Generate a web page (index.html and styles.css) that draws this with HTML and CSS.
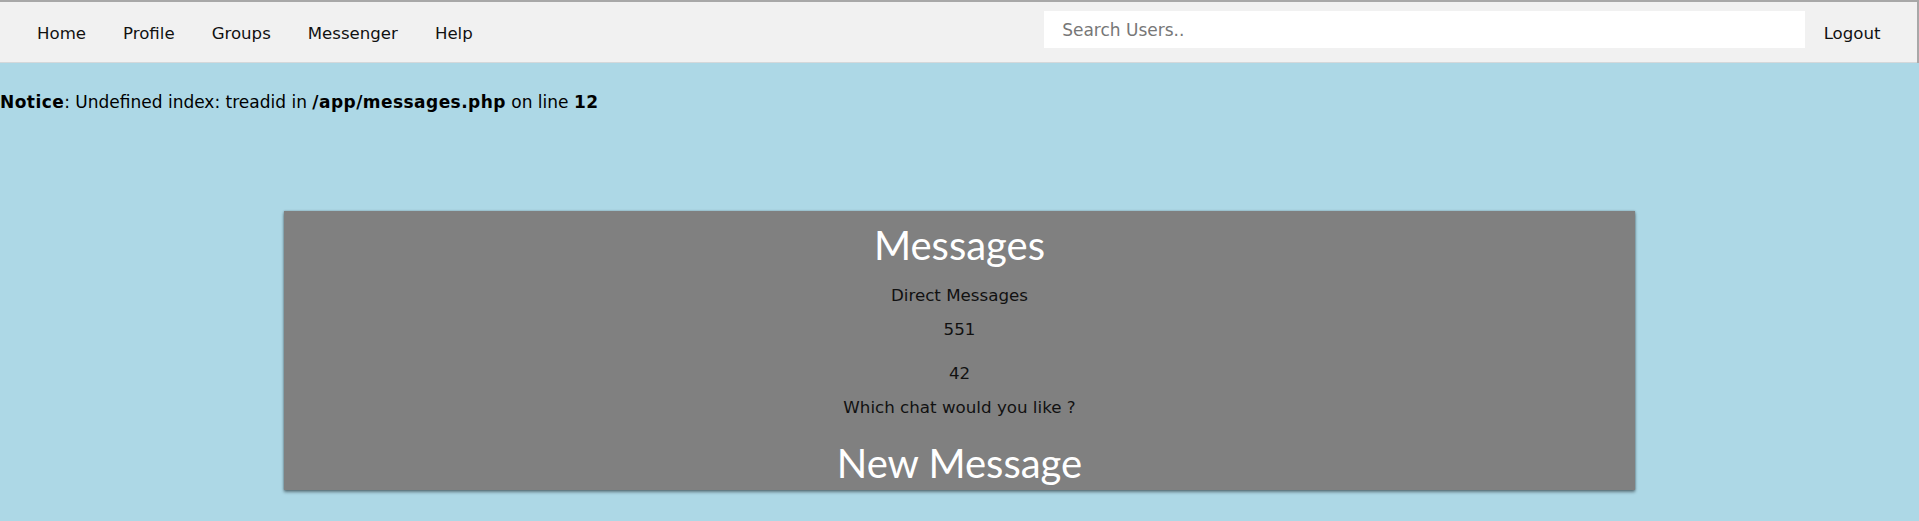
FILE: index.html
```html
<!DOCTYPE html>
<html lang="en">
<head>
<meta charset="utf-8">
<title>Messages</title>
<link rel="stylesheet" href="styles.css">
</head>
<body>
<div class="topnav">
  <a class="nav-link" href="#">Home</a>
  <a class="nav-link" href="#">Profile</a>
  <a class="nav-link" href="#">Groups</a>
  <a class="nav-link" href="#">Messenger</a>
  <a class="nav-link" href="#">Help</a>
  <input class="search" type="text" placeholder="Search Users..">
  <a class="nav-link logout" href="#">Logout</a>
</div>
<div class="notice"><b>Notice</b>: Undefined index: treadid in <b>/app/messages.php</b> on line <b>12</b></div>
<div class="panel">
  <h1 class="panel-title">Messages</h1>
  <p class="line line-sub">Direct Messages</p>
  <p class="line line-a">551</p>
  <p class="line line-b">42</p>
  <p class="line line-c">Which chat would you like ?</p>
  <h1 class="panel-title title-new">New Message</h1>
</div>
</body>
</html>
```
FILE: styles.css
```css
html, body {
  margin: 0;
  padding: 0;
}
body {
  background: #add8e6;
  font-family: "DejaVu Sans", Verdana, sans-serif;
  font-size: 16.7px;
  color: #000;
  height: 521px;
  overflow: hidden;
}
.topnav {
  display: flex;
  align-items: center;
  height: 61px;
  background: #f1f1f1;
  border-top: 2px solid #a8a8a8;
  border-right: 2px solid #a8a8a8;
  box-shadow: inset 0 -1px 0 #d4d8da;
  padding: 0 18px 0 18.5px;
}
.nav-link {
  padding: 0 18.5px;
  color: #111;
  text-decoration: none;
  font-size: 16.6px;
  line-height: 20px;
  margin-top: 3px;
}
.search {
  margin-left: auto;
  align-self: flex-start;
  margin-top: 9px;
  width: 761px;
  height: 37px;
  box-sizing: border-box;
  border: 0;
  outline: 0;
  background: #fff;
  padding: 0 0 0 18px;
  font-family: "DejaVu Sans", Verdana, sans-serif;
  font-size: 17px;
  color: #333;
}
.search::placeholder {
  color: #777;
}
.notice {
  padding-top: 30px;
  line-height: 19px;
  font-size: 17px;
}
.notice b {
  letter-spacing: 0.45px;
}
.panel {
  width: 1351px;
  margin: 99px auto 0;
  background: #808080;
  text-align: center;
  padding: 10px 0 2.5px;
  box-shadow: 0 2px 3px rgba(0, 0, 0, 0.45), 0 0 2px rgba(0, 0, 0, 0.25);
}
.panel-title {
  margin: 0;
  font-family: Lato, "Open Sans", sans-serif;
  font-weight: 400;
  font-size: 40px;
  line-height: 48px;
  color: #fff;
}
.line {
  margin: 0;
  line-height: 19px;
  color: #111;
}
.line-sub { margin-top: 17px; }
.line-a { margin-top: 15px; }
.line-b { margin-top: 25px; }
.line-c { margin-top: 15px; }
.title-new { margin-top: 22px; }
```
